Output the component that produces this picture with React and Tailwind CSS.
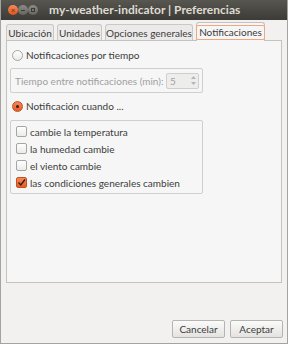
import { useState } from "react";

const tabs = [
  { label: "Ubicación", w: "w-[48px]", ml: "ml-0" },
  { label: "Unidades", w: "w-[45px]", ml: "ml-[3px]" },
  { label: "Opciones generales", w: "w-[88px]", ml: "ml-[3px]" },
  { label: "Notificaciones", w: "w-[69px]", ml: "ml-[3px]" },
];

const conditions = [
  { label: "cambie la temperatura", checked: false },
  { label: "la humedad cambie", checked: false },
  { label: "el viento cambie", checked: false },
  { label: "las condiciones generales cambien", checked: true },
];

function Radio({ checked }) {
  return checked ? (
    <span className="flex h-[11px] w-[11px] shrink-0 items-center justify-center rounded-full border border-[#c4511f] bg-gradient-to-b from-[#f4875a] to-[#e35d26]">
      <span className="h-[3px] w-[3px] rounded-full bg-[#3b1a0c]" />
    </span>
  ) : (
    <span className="h-[11px] w-[11px] shrink-0 rounded-full border border-[#a5a5a3] bg-gradient-to-b from-[#ffffff] to-[#ebebea]" />
  );
}

function Check({ checked }) {
  return checked ? (
    <span className="flex h-[11px] w-[11px] shrink-0 items-center justify-center rounded-[2px] border border-[#c4511f] bg-gradient-to-b from-[#f4875a] to-[#e35d26]">
      <svg width="9" height="9" viewBox="0 0 9 9">
        <path d="M1.5 4.5 L3.8 7 L8 1.5" fill="none" stroke="#3b1a0c" strokeWidth="1.4" />
      </svg>
    </span>
  ) : (
    <span className="h-[11px] w-[11px] shrink-0 rounded-[2px] border border-[#a5a5a3] bg-gradient-to-b from-[#ffffff] to-[#ebebea]" />
  );
}

export default function App() {
  const [active] = useState(3);

  return (
    <div
      className="flex h-[344px] w-[288px] flex-col overflow-hidden border-x border-b border-[#a3a3a1] bg-[#f2f1f0] text-[10px] leading-none whitespace-nowrap text-[#3c3c3c]"
      style={{ fontFamily: 'Lato, "Liberation Sans", sans-serif' }}
    >
      <div className="-mx-px flex h-[20px] shrink-0 items-center bg-gradient-to-b from-[#57564f] to-[#3c3b37] pl-[8px]">
        <div className="flex items-center">
          <span className="flex h-[10px] w-[10px] items-center justify-center rounded-full bg-gradient-to-b from-[#f78a5b] to-[#e0541b] text-[8px] leading-none text-[#6a2c12]">
            ×
          </span>
          <span className="flex h-[10px] w-[10px] items-center justify-center rounded-full bg-gradient-to-b from-[#8a8984] to-[#66655f]">
            <span className="h-[1px] w-[4px] bg-[#3c3b37]" />
          </span>
          <span className="flex h-[10px] w-[10px] items-center justify-center rounded-full bg-gradient-to-b from-[#8a8984] to-[#66655f]">
            <span className="h-[4px] w-[4px] border border-[#3c3b37]" />
          </span>
        </div>
        <span className="ml-[11px] text-[12px] font-bold text-[#dfdbd2]">
          my-weather-indicator | Preferencias
        </span>
      </div>

      <div className="mx-[5px] mt-[2px] flex flex-col">
        <div className="flex items-end">
          {tabs.map((tab, i) =>
            i === active ? (
              <div
                key={tab.label}
                className={`${tab.w} ${tab.ml} relative -mb-px flex h-[19px] items-center justify-center rounded-t-[3px] border border-b-0 border-[#c2c2c0] bg-[#f6f6f6]`}
              >
                <span className="rounded-[2px] border border-[#f3a482] px-[2px] py-[1px] leading-[11px]">{tab.label}</span>
              </div>
            ) : (
              <div
                key={tab.label}
                className={`${tab.w} ${tab.ml} flex h-[16px] items-center justify-center rounded-t-[3px] border border-b-0 border-[#c8c8c6] bg-[#ebeae8]`}
              >
                {tab.label}
              </div>
            )
          )}
        </div>

        <div className="flex h-[243px] flex-col border border-[#c2c2c0] bg-[#f6f6f6] px-[3px] pt-[7px]">
          <div className="flex h-[14px] items-center gap-[3px] pl-[2px]">
            <Radio checked={false} />
            <span>Notificaciones por tiempo</span>
          </div>

          <div className="mt-[6px] flex h-[25px] w-[193px] items-center justify-between rounded-[2px] border border-[#cfcfcd] pl-[4px] pr-[3px]">
            <span className="text-[#a0a09e]">Tiempo entre notificaciones (min):</span>
            <div className="flex h-[16px] w-[33px] items-center justify-between rounded-[2px] border border-[#cfcfcd] bg-[#ededec] pl-[3px] pr-[1px] text-[#a0a09e]">
              <span>5</span>
              <svg width="7" height="11" viewBox="0 0 7 11">
                <path d="M1 4 L3.5 1 L6 4 Z M1 7 L3.5 10 L6 7 Z" fill="#b5b5b3" />
              </svg>
            </div>
          </div>

          <div className="mt-[6px] flex h-[14px] items-center gap-[3px] pl-[2px]">
            <Radio checked />
            <span>Notificación cuando ...</span>
          </div>

          <div className="mt-[7px] flex w-[193px] flex-col rounded-[2px] border border-[#cfcfcd] py-[2px] pl-[5px]">
            {conditions.map((c) => (
              <div key={c.label} className="flex h-[17px] items-center gap-[3px]">
                <Check checked={c.checked} />
                <span>{c.label}</span>
              </div>
            ))}
          </div>
        </div>
      </div>

      <div className="mt-auto mb-[5px] mr-[4px] flex justify-end gap-[5px]">
        <button className="h-[18px] w-[53px] rounded-[2px] border border-[#b4b4b2] bg-gradient-to-b from-[#fbfbfa] to-[#e4e3e1] text-[10px] leading-none text-[#3c3c3c]">
          Cancelar
        </button>
        <button className="h-[18px] w-[53px] rounded-[2px] border border-[#b4b4b2] bg-gradient-to-b from-[#fbfbfa] to-[#e4e3e1] text-[10px] leading-none text-[#3c3c3c]">
          Aceptar
        </button>
      </div>
    </div>
  );
}
